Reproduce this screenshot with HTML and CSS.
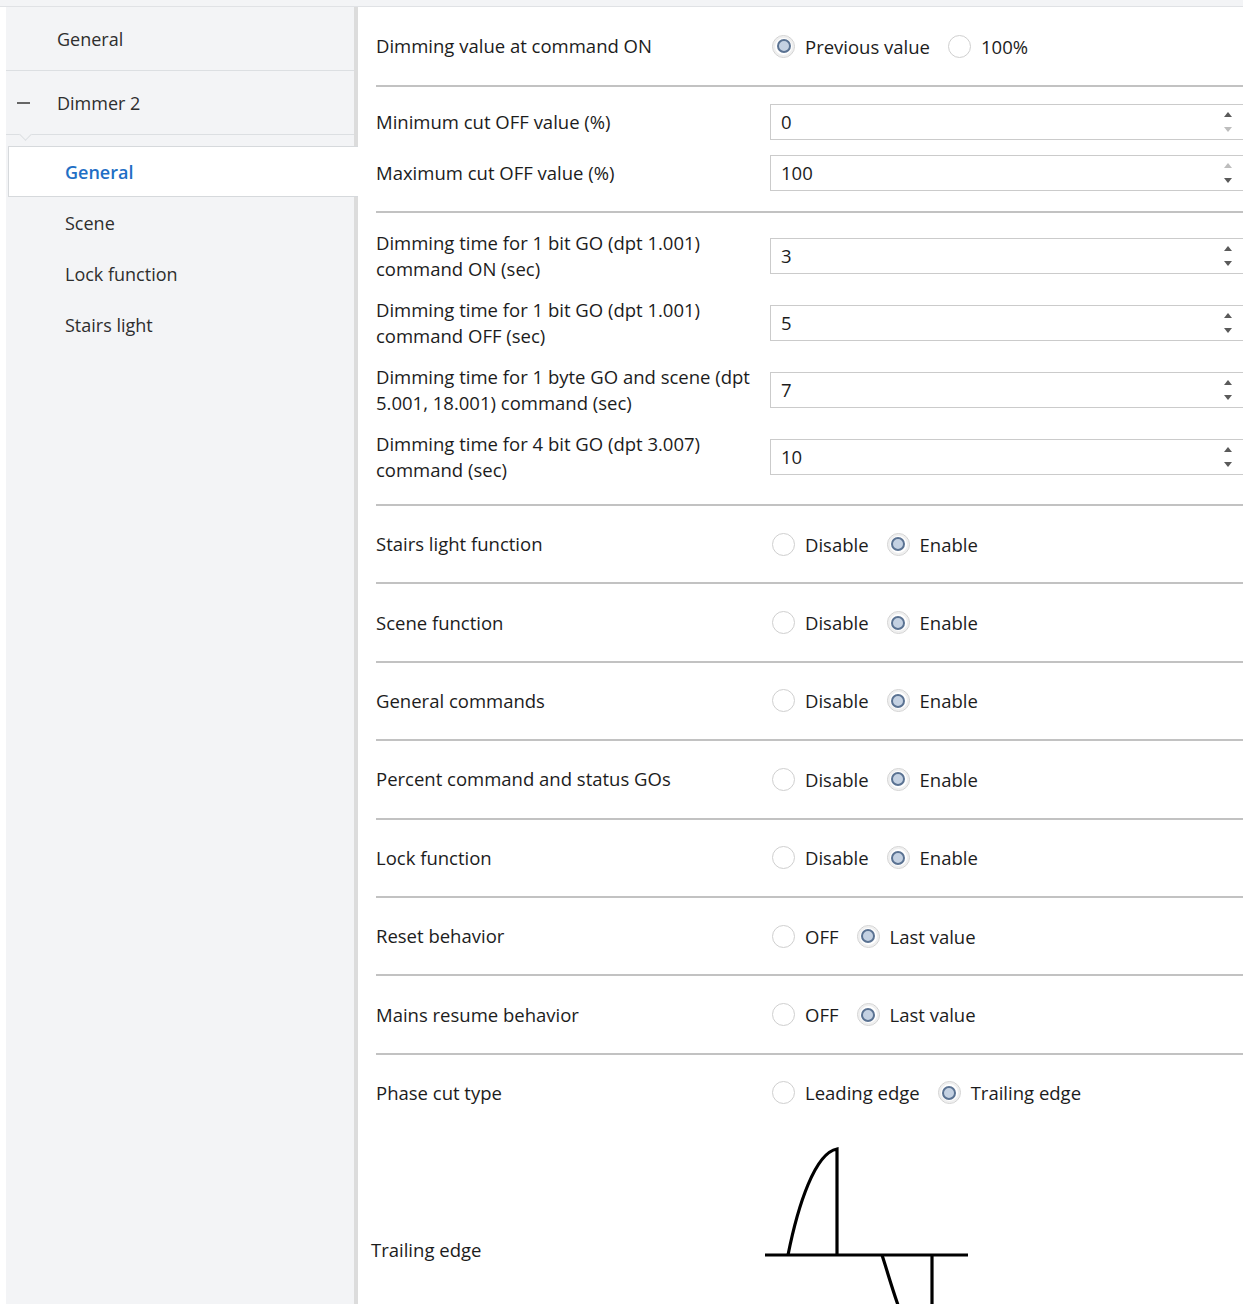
FILE: index.html
```html
<!DOCTYPE html>
<html lang="en">
<head>
<meta charset="utf-8">
<title>Dimmer 2 – General</title>
<link rel="stylesheet" href="styles.css">
</head>
<body>
<div class="topbar"></div>
<div class="app">
  <nav class="sidebar">
    <div class="nav-item top">General</div>
    <div class="nav-item top parent"><span class="minus"></span>Dimmer 2</div>
    <div class="subnav">
      <div class="nav-item sub active">General</div>
      <div class="nav-item sub">Scene</div>
      <div class="nav-item sub">Lock function</div>
      <div class="nav-item sub">Stairs light</div>
    </div>
  </nav>

  <main class="content">
    <div class="row radio-row first">
      <div class="label">Dimming value at command ON</div>
      <div class="opts">
        <span class="radio on"></span><span class="opt">Previous value</span>
        <span class="radio"></span><span class="opt">100%</span>
      </div>
    </div>
    <div class="sep"></div>

    <div class="block">
      <div class="row field-row">
        <div class="label">Minimum cut OFF value (%)</div>
        <div class="spin"><span class="val">0</span><span class="arrows"><i class="up"></i><i class="down off"></i></span></div>
      </div>
      <div class="row field-row">
        <div class="label">Maximum cut OFF value (%)</div>
        <div class="spin"><span class="val">100</span><span class="arrows"><i class="up off"></i><i class="down"></i></span></div>
      </div>
    </div>
    <div class="sep"></div>

    <div class="block times">
      <div class="row field-row tall">
        <div class="label">Dimming time for 1 bit GO (dpt 1.001)<br>command ON (sec)</div>
        <div class="spin"><span class="val">3</span><span class="arrows"><i class="up"></i><i class="down"></i></span></div>
      </div>
      <div class="row field-row tall">
        <div class="label">Dimming time for 1 bit GO (dpt 1.001)<br>command OFF (sec)</div>
        <div class="spin"><span class="val">5</span><span class="arrows"><i class="up"></i><i class="down"></i></span></div>
      </div>
      <div class="row field-row tall">
        <div class="label">Dimming time for 1 byte GO and scene (dpt<br>5.001, 18.001) command (sec)</div>
        <div class="spin"><span class="val">7</span><span class="arrows"><i class="up"></i><i class="down"></i></span></div>
      </div>
      <div class="row field-row tall">
        <div class="label">Dimming time for 4 bit GO (dpt 3.007)<br>command (sec)</div>
        <div class="spin"><span class="val">10</span><span class="arrows"><i class="up"></i><i class="down"></i></span></div>
      </div>
    </div>
    <div class="sep"></div>

    <div class="row radio-row">
      <div class="label">Stairs light function</div>
      <div class="opts"><span class="radio"></span><span class="opt">Disable</span><span class="radio on"></span><span class="opt">Enable</span></div>
    </div>
    <div class="sep"></div>
    <div class="row radio-row">
      <div class="label">Scene function</div>
      <div class="opts"><span class="radio"></span><span class="opt">Disable</span><span class="radio on"></span><span class="opt">Enable</span></div>
    </div>
    <div class="sep"></div>
    <div class="row radio-row">
      <div class="label">General commands</div>
      <div class="opts"><span class="radio"></span><span class="opt">Disable</span><span class="radio on"></span><span class="opt">Enable</span></div>
    </div>
    <div class="sep"></div>
    <div class="row radio-row">
      <div class="label">Percent command and status GOs</div>
      <div class="opts"><span class="radio"></span><span class="opt">Disable</span><span class="radio on"></span><span class="opt">Enable</span></div>
    </div>
    <div class="sep"></div>
    <div class="row radio-row">
      <div class="label">Lock function</div>
      <div class="opts"><span class="radio"></span><span class="opt">Disable</span><span class="radio on"></span><span class="opt">Enable</span></div>
    </div>
    <div class="sep"></div>
    <div class="row radio-row">
      <div class="label">Reset behavior</div>
      <div class="opts"><span class="radio"></span><span class="opt">OFF</span><span class="radio on"></span><span class="opt">Last value</span></div>
    </div>
    <div class="sep"></div>
    <div class="row radio-row">
      <div class="label">Mains resume behavior</div>
      <div class="opts"><span class="radio"></span><span class="opt">OFF</span><span class="radio on"></span><span class="opt">Last value</span></div>
    </div>
    <div class="sep"></div>
    <div class="row radio-row">
      <div class="label">Phase cut type</div>
      <div class="opts"><span class="radio"></span><span class="opt">Leading edge</span><span class="radio on"></span><span class="opt">Trailing edge</span></div>
    </div>

    <div class="row figure-row">
      <div class="label">Trailing edge</div>
      <svg class="wave" width="210" height="230" viewBox="0 0 210 230" aria-hidden="true">
        <g fill="none" stroke="#000" stroke-width="3.2">
          <path d="M0 120H203"/>
          <path d="M23 120C33 70 50 18 72 14V120"/>
          <path d="M117 120C127 150 145 222 167 226"/>
          <path d="M167 120V230"/>
        </g>
      </svg>
    </div>
  </main>
</div>
</body>
</html>
```

FILE: styles.css
```css
html, body {
  margin: 0;
  height: 100%;
  overflow: hidden;
  background: #fff;
}

body {
  font-family: "Open Sans", "Noto Sans", sans-serif;
  font-size: 18.5px;
  color: #1c1c1c;
}

.topbar {
  height: 6px;
  background: #f3f4f6;
  border-bottom: 1px solid #e0e2e5;
}

.app {
  display: flex;
  height: calc(100% - 7px);
}

/* ---------- navigation tree ---------- */
.sidebar {
  margin-left: 6px;
  width: 348px;
  flex: none;
  background: #f3f4f6;
  border-right: 4px solid #dcdcdc;
  font-size: 18px;
}

.nav-item {
  display: flex;
  align-items: center;
  color: #2e2e2e;
}

.nav-item.top {
  height: 63px;
  padding-left: 51px;
  border-bottom: 1px solid #dcdfe2;
}

.nav-item.parent {
  position: relative;
  padding-left: 11px;
}

/* small notch pointing at the expanded children */
.nav-item.parent::after {
  content: "";
  position: absolute;
  left: 15px;
  bottom: -5px;
  width: 8px;
  height: 8px;
  background: #f3f4f6;
  border-right: 1px solid #dcdfe2;
  border-bottom: 1px solid #dcdfe2;
  transform: rotate(45deg);
}

.minus {
  width: 13px;
  height: 2px;
  background: #666;
  margin-right: 27px;
}

.subnav {
  padding-top: 11px;
}

.nav-item.sub {
  height: 51px;
  padding-left: 59px;
}

.nav-item.sub.active {
  height: 49px;
  margin: 0 -4px 0 2px;
  padding-left: 56px;
  background: #fff;
  border: 1px solid #d6d9dc;
  border-right: none;
  color: #1f6fc5;
  font-weight: 600;
}

/* ---------- parameter page ---------- */
.content {
  flex: 1;
  padding-left: 18px;
  margin-right: -4px;
}

.row {
  display: grid;
  grid-template-columns: 394px 1fr;
  align-items: center;
}

.label {
  line-height: 26px;
}

.radio-row {
  height: 76.4px;
}

.radio-row.first {
  height: 78px;
}

.sep {
  height: 2px;
  background: #c2c2c2;
}

.block {
  padding: 9px 0 13px;
}

.block.times {
  padding-bottom: 14px;
}

.field-row {
  height: 51px;
}

.field-row.tall {
  height: 67px;
}

.opts {
  display: flex;
  align-items: center;
}

.radio {
  box-sizing: border-box;
  width: 23px;
  height: 23px;
  margin-left: 2px;
  border-radius: 50%;
  border: 1px solid #cfcfcf;
  background: #fff;
  display: flex;
  align-items: center;
  justify-content: center;
}

.radio.on {
  border-color: #d2d2d2;
  box-shadow: inset 0 0 0 2px #efefef;
}

.radio.on::after {
  content: "";
  box-sizing: border-box;
  width: 14px;
  height: 14px;
  border-radius: 50%;
  border: 2px solid #5a7292;
  background: #c4d1e2;
}

.opt {
  margin-left: 10px;
  margin-right: 16px;
}

.spin {
  box-sizing: border-box;
  height: 36px;
  border: 1px solid #cbcbcb;
  display: flex;
  align-items: center;
  padding-left: 10px;
  padding-right: 14px;
}

.arrows {
  margin-left: auto;
  display: flex;
  flex-direction: column;
  gap: 10px;
}

.arrows i {
  width: 0;
  height: 0;
  border-left: 4px solid transparent;
  border-right: 4px solid transparent;
}

.arrows .up {
  border-bottom: 5px solid #5a5a5a;
}

.arrows .down {
  border-top: 5px solid #5a5a5a;
}

.arrows .up.off {
  border-bottom-color: #bdbdbd;
}

.arrows .down.off {
  border-top-color: #bdbdbd;
}

.figure-row {
  margin-left: -5px;
  margin-top: 4px;
}

.wave {
  display: block;
}
```
